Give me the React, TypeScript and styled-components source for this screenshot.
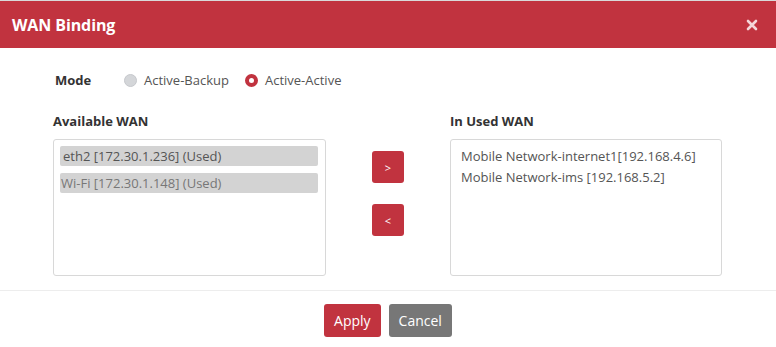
import React from "react";
import styled, { createGlobalStyle } from "styled-components";

const Global = createGlobalStyle`
  html, body { margin: 0; padding: 0; background: #fff; }
  body { font-family: "Open Sans", "Noto Sans", Arial, sans-serif; }
  * { box-sizing: border-box; }
`;

const Dialog = styled.div`
  width: 776px;
  height: 347px;
  border-top: 1px solid #d9d9d9;
  display: flex;
  flex-direction: column;
  background: #fff;
  overflow: hidden;
`;

const Header = styled.div`
  height: 47px;
  flex: none;
  background: #c1333f;
  display: flex;
  align-items: center;
  justify-content: space-between;
  padding: 0 16px 0 12px;
`;

const Title = styled.h1`
  margin: 0;
  color: #fff;
  font-size: 16px;
  font-weight: 700;
  letter-spacing: -0.1px;
`;

const Close = styled.button`
  border: 0;
  background: none;
  padding: 0;
  width: 16px;
  height: 16px;
  display: flex;
  align-items: center;
  justify-content: center;
  cursor: pointer;
`;

const Body = styled.div`
  flex: 1;
  padding: 22px 54px 0 53px;
  display: flex;
  flex-direction: column;
`;

const ModeRow = styled.div`
  display: flex;
  align-items: center;
  height: 20px;
  padding-left: 2px;
  font-size: 13px;
`;

const ModeLabel = styled.span`
  font-weight: 700;
  color: #333;
  width: 69px;
`;

const RadioOption = styled.label`
  display: flex;
  align-items: center;
  gap: 7px;
  color: #555;
  margin-right: 16px;
`;

const RadioDot = styled.span<{ $checked?: boolean }>`
  width: 13px;
  height: 13px;
  border-radius: 50%;
  flex: none;
  ${(p) =>
    p.$checked
      ? `background: #fff; border: 4px solid #c1333f;`
      : `background: #d4d6d9; border: 1px solid #c6c8cc;`}
`;

const Columns = styled.div`
  display: grid;
  grid-template-columns: 273px 1fr 272px;
  margin-top: 22px;
`;

const Column = styled.div`
  display: flex;
  flex-direction: column;
`;

const SectionLabel = styled.div`
  font-size: 13px;
  font-weight: 700;
  color: #333;
  height: 18px;
  line-height: 18px;
  margin-bottom: 9px;
`;

const ListBox = styled.div`
  height: 137px;
  border: 1px solid #d8d8d8;
  border-radius: 3px;
  padding: 6px 7px 6px 6px;
  display: flex;
  flex-direction: column;
  gap: 7px;
`;

const UsedBox = styled.div`
  height: 137px;
  border: 1px solid #d8d8d8;
  border-radius: 3px;
  padding: 6px 10px;
  font-size: 13px;
  color: #555;
  line-height: 21px;
`;

const ListItem = styled.div<{ $muted?: boolean }>`
  height: 20px;
  background: #d3d3d3;
  border-radius: 2px;
  font-size: 13px;
  line-height: 20px;
  padding-left: ${(p) => (p.$muted ? "1px" : "3px")};
  color: ${(p) => (p.$muted ? "#777" : "#555")};
  white-space: nowrap;
`;

const Middle = styled.div`
  display: flex;
  flex-direction: column;
  align-items: center;
  padding-top: 39px;
  gap: 21px;
`;

const MoveButton = styled.button`
  width: 32px;
  height: 32px;
  border: 0;
  border-radius: 3px;
  background: #c1333f;
  color: #fff;
  font-family: "Open Sans", sans-serif;
  font-size: 11px;
  padding: 0;
  cursor: pointer;
`;

const Footer = styled.div`
  border-top: 1px solid #ededed;
  margin-top: 14px;
  height: 57px;
  display: flex;
  justify-content: center;
  gap: 8px;
  padding-top: 13px;
`;

const ActionButton = styled.button<{ $variant: "primary" | "secondary" }>`
  height: 33px;
  border: 0;
  border-radius: 3px;
  padding: 0 10px;
  background: ${(p) => (p.$variant === "primary" ? "#c1333f" : "#777777")};
  color: #fff;
  font-family: "Open Sans", sans-serif;
  font-size: 14px;
  cursor: pointer;
`;

export default function App() {
  return (
    <>
      <Global />
      <Dialog>
        <Header>
          <Title>WAN Binding</Title>
          <Close aria-label="close">
            <svg width="12" height="12" viewBox="0 0 12 12">
              <path d="M2 2 L10 10 M10 2 L2 10" stroke="#f4d6d9" strokeWidth="2.6" strokeLinecap="round" />
            </svg>
          </Close>
        </Header>
        <Body>
          <ModeRow>
            <ModeLabel>Mode</ModeLabel>
            <RadioOption>
              <RadioDot />
              Active-Backup
            </RadioOption>
            <RadioOption>
              <RadioDot $checked />
              Active-Active
            </RadioOption>
          </ModeRow>
          <Columns>
            <Column>
              <SectionLabel>Available WAN</SectionLabel>
              <ListBox>
                <ListItem>eth2 [172.30.1.236] (Used)</ListItem>
                <ListItem $muted>Wi-Fi [172.30.1.148] (Used)</ListItem>
              </ListBox>
            </Column>
            <Middle>
              <MoveButton>&gt;</MoveButton>
              <MoveButton>&lt;</MoveButton>
            </Middle>
            <Column>
              <SectionLabel>In Used WAN</SectionLabel>
              <UsedBox>
                <div>Mobile Network-internet1[192.168.4.6]</div>
                <div>Mobile Network-ims [192.168.5.2]</div>
              </UsedBox>
            </Column>
          </Columns>
        </Body>
        <Footer>
          <ActionButton $variant="primary">Apply</ActionButton>
          <ActionButton $variant="secondary">Cancel</ActionButton>
        </Footer>
      </Dialog>
    </>
  );
}
